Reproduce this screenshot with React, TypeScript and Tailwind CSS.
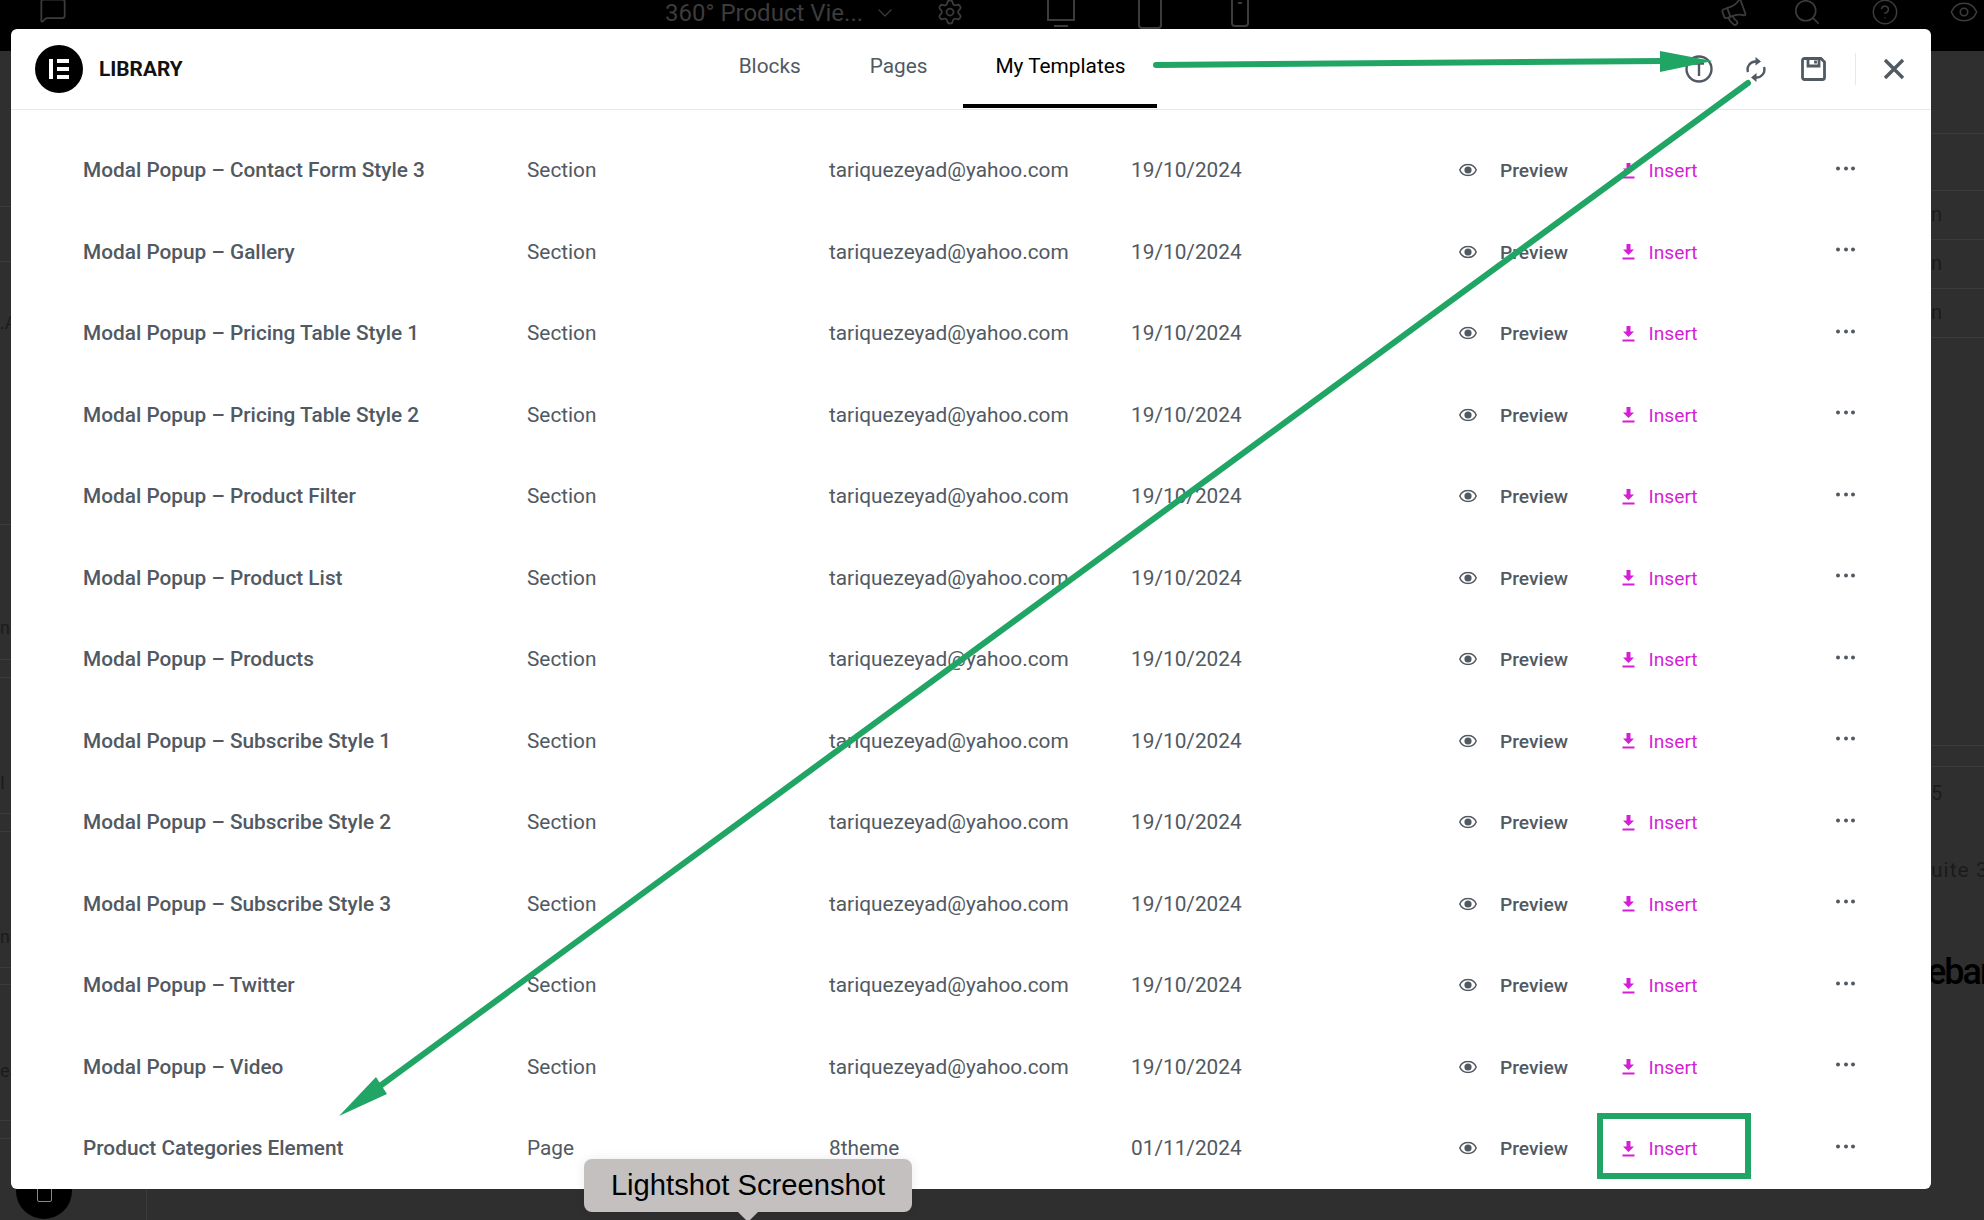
import React from "react";
import { ChevronDown, MessageSquare, Search, Settings, Megaphone, CircleHelp, Eye } from "lucide-react";

const rows: [string, string, string, string][] = [
  ["Modal Popup – Contact Form Style 3", "Section", "tariquezeyad@yahoo.com", "19/10/2024"],
  ["Modal Popup – Gallery", "Section", "tariquezeyad@yahoo.com", "19/10/2024"],
  ["Modal Popup – Pricing Table Style 1", "Section", "tariquezeyad@yahoo.com", "19/10/2024"],
  ["Modal Popup – Pricing Table Style 2", "Section", "tariquezeyad@yahoo.com", "19/10/2024"],
  ["Modal Popup – Product Filter", "Section", "tariquezeyad@yahoo.com", "19/10/2024"],
  ["Modal Popup – Product List", "Section", "tariquezeyad@yahoo.com", "19/10/2024"],
  ["Modal Popup – Products", "Section", "tariquezeyad@yahoo.com", "19/10/2024"],
  ["Modal Popup – Subscribe Style 1", "Section", "tariquezeyad@yahoo.com", "19/10/2024"],
  ["Modal Popup – Subscribe Style 2", "Section", "tariquezeyad@yahoo.com", "19/10/2024"],
  ["Modal Popup – Subscribe Style 3", "Section", "tariquezeyad@yahoo.com", "19/10/2024"],
  ["Modal Popup – Twitter", "Section", "tariquezeyad@yahoo.com", "19/10/2024"],
  ["Modal Popup – Video", "Section", "tariquezeyad@yahoo.com", "19/10/2024"],
  ["Product Categories Element", "Page", "8theme", "01/11/2024"],
];

function InsertIcon() {
  return (
    <svg width="13" height="16" viewBox="0 0 13 16" fill="#d41fd6" className="shrink-0 -translate-y-px">
      <path d="M4.500 0h4v5.500h3.500L6.500 11 1 5.500h3.500z" />
      <rect x="0.500" y="13.500" width="12" height="2" />
    </svg>
  );
}

function EyeIcon() {
  return (
    <svg width="18" height="13" viewBox="0 0 18 13" className="shrink-0 -translate-y-[1.500px]">
      <path d="M9 1C5 1 2 3.600.8 6.500 2 9.400 5 12 9 12s7-2.600 8.200-5.500C16 3.600 13 1 9 1z" fill="none" stroke="#515962" strokeWidth="1.500" />
      <circle cx="9" cy="6.500" r="3.600" fill="#515962" />
    </svg>
  );
}

function Row({ r }: { r: [string, string, string, string] }) {
  return (
    <div className="flex h-[81.500px] items-center whitespace-nowrap text-[20.800px] text-[#515962]">
      <div className="w-[444px] font-medium">{r[0]}</div>
      <div className="w-[302px]">{r[1]}</div>
      <div className="w-[302px]">{r[2]}</div>
      <div className="w-[328px]">{r[3]}</div>
      <div className="flex w-[163px] items-center gap-[23px] pt-[2px] text-[19.200px] font-medium">
        <EyeIcon />
        <span>Preview</span>
      </div>
      <div className="flex w-[214px] items-center gap-[14px] pt-[2px] text-[19.200px] text-[#d41fd6]">
        <InsertIcon />
        <span className="-ml-[0.500px]">Insert</span>
      </div>
      <div className="flex -translate-y-[2.500px] gap-[3.500px]">
        <span className="h-[4px] w-[4px] rounded-full bg-[#515962]" />
        <span className="h-[4px] w-[4px] rounded-full bg-[#515962]" />
        <span className="h-[4px] w-[4px] rounded-full bg-[#515962]" />
      </div>
    </div>
  );
}

function Seg({ h, pt, text, cls }: { h: string; pt?: string; text?: string; cls?: string }) {
  return (
    <div className={`${h} ${pt ?? ""} ${cls ?? ""} shrink-0 overflow-hidden whitespace-nowrap border-b border-[#3b3b3b] leading-[22px]`}>
      {text}
    </div>
  );
}

function TopBar() {
  return (
    <div className="flex h-[51px] items-start bg-black text-[#3c3c3c]">
      <MessageSquare size={28} strokeWidth={1.500} className="ml-[39px] -mt-[4px] shrink-0" />
      <span className="ml-[598px] mt-[-1px] whitespace-nowrap text-[24px] leading-[28px]">360° Product Vie...</span>
      <ChevronDown size={24} strokeWidth={1.200} className="ml-[10px] mt-[1px] shrink-0" />
      <Settings size={28} strokeWidth={1.500} className="ml-[39px] -mt-[2px] shrink-0" />
      <svg width="30" height="32" viewBox="0 0 30 32" fill="none" stroke="#3c3c3c" strokeWidth="2" className="ml-[82px] -mt-[4px] shrink-0">
        <path d="M2 2h26v22H2zM8 30h14" />
      </svg>
      <svg width="26" height="34" viewBox="0 0 26 34" fill="none" stroke="#3c3c3c" strokeWidth="2" className="ml-[61px] -mt-[4px] shrink-0">
        <rect x="2" y="2" width="22" height="30" rx="3" />
      </svg>
      <svg width="20" height="32" viewBox="0 0 20 32" fill="none" stroke="#3c3c3c" strokeWidth="2" className="ml-[67px] -mt-[4px] shrink-0">
        <rect x="2" y="2" width="16" height="28" rx="3" />
        <path d="M8 7h4" />
      </svg>
      <Megaphone size={28} strokeWidth={1.500} className="relative ml-[470px] -mt-[1px] shrink-0 -rotate-[20deg]" />
      <Search size={30} strokeWidth={1.300} className="ml-[44px] -mt-[3px] shrink-0" />
      <CircleHelp size={28} strokeWidth={1.300} className="ml-[49px] -mt-[2px] shrink-0" />
      <Eye size={30} strokeWidth={1.300} className="ml-[50px] -mt-[3px] shrink-0" />
    </div>
  );
}

function Backdrop() {
  return (
    <div className="flex h-[1220px] w-[1984px] flex-col overflow-hidden bg-[#2f2f2f] font-['Roboto',sans-serif] text-[#1b1b1b]">
      <TopBar />
      <div className="flex min-h-0 flex-1">
        <div className="flex w-[11px] shrink-0 flex-col overflow-hidden text-[18px]">
          <Seg h="h-[156px]" />
          <Seg h="h-[55px]" />
          <Seg h="h-[263px]" pt="pt-[50px]" text=".Ad" />
          <Seg h="h-[135px]" pt="pt-[92px]" text="na" />
          <Seg h="h-[18px]" />
          <Seg h="h-[136px]" pt="pt-[94px]" text="I" />
          <Seg h="h-[18px]" />
          <Seg h="h-[136px]" pt="pt-[94px]" text="nn" />
          <Seg h="h-[17px]" />
          <Seg h="h-[136px]" pt="pt-[75px]" text="ea" />
          <Seg h="h-[18px]" />
        </div>
        <div className="flex flex-1 flex-col justify-end">
          <div className="h-[31px] w-[136px] border-r border-[#3b3b3b]" />
        </div>
        <div className="flex w-[53px] shrink-0 flex-col overflow-hidden text-[20px]">
          <Seg h="h-[83px]" />
          <Seg h="h-[57px]" />
          <Seg h="h-[49px]" pt="pt-[12px]" text="n" />
          <Seg h="h-[49px]" pt="pt-[12px]" text="n" />
          <Seg h="h-[49px]" pt="pt-[12px]" text="n" />
          <Seg h="h-[408px]" />
          <Seg h="h-[21px]" />
          <div className="shrink-0 pt-[15px] leading-[22px]">5</div>
          <div className="shrink-0 whitespace-nowrap pt-[55px] text-[21px] leading-[22px] tracking-[1px]">uite 3</div>
          <div className="ml-[-4px] shrink-0 whitespace-nowrap pt-[73px] text-[36px] font-medium leading-[36px] tracking-[-2px] text-black">ebar</div>
        </div>
      </div>
    </div>
  );
}

function Annotations() {
  return (
    <svg width="1984" height="1220" viewBox="0 0 1984 1220" className="pointer-events-none absolute left-0 top-0">
      <path d="M1156 65 L1664 61" stroke="#21a565" strokeWidth="6" strokeLinecap="round" fill="none" />
      <path d="M1660 51 L1712.500 61 L1660 72 Z" fill="#21a565" />
      <path d="M1748 83 L380 1086" stroke="#21a565" strokeWidth="6" strokeLinecap="round" fill="none" />
      <path d="M339 1116 L376 1077 L387 1094 Z" fill="#21a565" />
    </svg>
  );
}

export default function App() {
  return (
    <div className="relative h-[1220px] w-[1984px] overflow-hidden">
      <Backdrop />
      <div className="absolute left-[16px] top-[1163px] flex h-[56px] w-[56px] items-center justify-center rounded-full bg-black">
        <div className="mt-[7px] h-[15px] w-[15px] rounded-[2px] border border-[#888]" />
      </div>
      <div className="absolute left-[11px] top-[29px] flex h-[1160px] w-[1920px] flex-col overflow-hidden rounded-[6px] bg-white font-['Roboto',sans-serif]">
        <header className="flex h-[81px] shrink-0 items-center border-b border-[#e6e8ea] pl-[24px]">
          <div className="flex h-[48px] w-[48px] shrink-0 items-center justify-center rounded-full bg-black">
            <svg width="20" height="20" viewBox="0 0 20 20" fill="#fff">
              <rect x="0" y="0" width="4" height="20" />
              <rect x="8" y="0" width="12" height="4" />
              <rect x="8" y="8" width="12" height="4" />
              <rect x="8" y="16" width="12" height="4" />
            </svg>
          </div>
          <span className="ml-[16px] mt-[2px] text-[20.800px] font-bold text-[#111]">LIBRARY</span>
          <nav className="ml-[524px] flex h-[79px] items-stretch gap-[4px] self-start text-[20.800px] text-[#515962]">
            <span className="flex items-center border-b-4 border-transparent px-[32px]">Blocks</span>
            <span className="ml-px flex items-center border-b-4 border-transparent px-[32px]">Pages</span>
            <span className="flex items-center border-b-4 border-black px-[32px] text-black">My Templates</span>
          </nav>
          <div className="ml-auto flex items-center pr-[26.500px]">
            <svg width="28" height="28" viewBox="0 0 28 28" fill="none" stroke="#515962" strokeWidth="2.400">
              <circle cx="14" cy="14" r="12.500" />
              <path d="M14 21V9M9 8.500h10" />
            </svg>
            <svg width="20" height="27" viewBox="0 0 20 27" fill="none" stroke="#515962" strokeWidth="2.400" className="ml-[33px]">
              <path d="M2 16 A8 8 0 0 1 10 5.500" />
              <path d="M18 11 A8 8 0 0 1 10 21.500" />
              <path d="M9.500 1 L15 5.500 L9.500 9.500 Z" fill="#515962" stroke="none" />
              <path d="M10.500 17 L5 21.500 L10.500 26 Z" fill="#515962" stroke="none" />
            </svg>
            <svg width="25" height="24" viewBox="0 0 25 24" fill="none" stroke="#515962" strokeWidth="2.800" className="ml-[35px]">
              <path d="M3.500 1.500H20l3.500 3.500v15.500a2 2 0 0 1-2 2h-18a2 2 0 0 1-2-2v-17a2 2 0 0 1 2-2z" />
              <path d="M7 1.500v7.500h11V1.500" />
              <path d="M14.500 3.500v3" />
            </svg>
            <div className="ml-[29px] h-[32px] w-px bg-[#e6e8ea]" />
            <svg width="22" height="22" viewBox="0 0 22 22" fill="none" stroke="#515962" strokeWidth="3.400" className="ml-[27px]">
              <path d="M2 2 L20 20 M20 2 L2 20" />
            </svg>
          </div>
        </header>
        <main className="pl-[72px] pt-[20px]">
          {rows.map((r) => (
            <Row key={r[0]} r={r} />
          ))}
        </main>
      </div>
      <Annotations />
      <div className="absolute left-[1597px] top-[1113px] h-[66px] w-[154px] border-[6px] border-[#21a565]" />
      <div className="absolute left-[584px] top-[1159px] flex h-[53px] w-[328px] items-center justify-center rounded-[8px] bg-[#c4c0c0] font-['Liberation_Sans',sans-serif] text-[29.200px] text-black shadow-[0_0_12px_rgba(0,0,0,0.08)]">
        Lightshot Screenshot
        <span className="absolute left-[154px] top-[53px] h-0 w-0 border-x-[10px] border-t-[10px] border-x-transparent border-t-[#c4c0c0]" />
      </div>
    </div>
  );
}
